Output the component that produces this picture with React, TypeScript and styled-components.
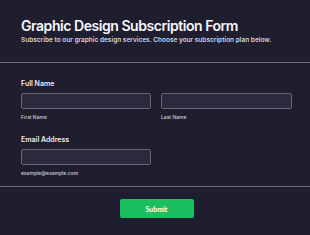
import React from "react";
import styled, { createGlobalStyle } from "styled-components";

const GlobalStyle = createGlobalStyle`
  html, body {
    margin: 0;
    padding: 0;
    background: #1f1e2e;
  }
  body {
    font-family: Inter, "Noto Sans", sans-serif;
    color: #f2f1f7;
  }
`;

const Page = styled.div`
  width: 310px;
  min-height: 235px;
  background: #1f1e2e;
`;

const Header = styled.header`
  padding: 17px 18px 17px 21px;
`;

const Title = styled.h1`
  margin: 0;
  font-size: 14px;
  line-height: 17px;
  font-weight: 600;
  letter-spacing: -0.45px;
  color: #f7f6fb;
`;

const Subtitle = styled.p`
  margin: 2px 0 0;
  font-size: 6.5px;
  line-height: 9px;
  font-weight: 600;
  color: #d4d2de;
`;

const Divider = styled.hr`
  margin: 0;
  border: 0;
  height: 1px;
  background: #6c6b7c;
`;

const Body = styled.section`
  padding: 16px 18px 10px 21px;
`;

const Field = styled.div<{ $gap?: number }>`
  margin-top: ${(p) => p.$gap ?? 0}px;
`;

const Label = styled.label`
  display: block;
  font-size: 7px;
  line-height: 9px;
  font-weight: 600;
  color: #ecebf2;
  margin-bottom: 5px;
`;

const Row = styled.div`
  display: grid;
  grid-template-columns: 130px 131px;
  column-gap: 10px;
`;

const Col = styled.div<{ $width?: number }>`
  display: flex;
  flex-direction: column;
  width: ${(p) => (p.$width ? `${p.$width}px` : "auto")};
`;

const Input = styled.input`
  box-sizing: border-box;
  width: 100%;
  height: 16px;
  margin: 0;
  padding: 0 4px;
  background: #2b2a3d;
  border: 1px solid #67667a;
  border-radius: 2px;
  color: #f2f1f7;
  font: inherit;
  font-size: 7px;
  outline: none;
`;

const Hint = styled.span`
  display: block;
  margin-top: 5px;
  font-size: 5px;
  line-height: 6px;
  font-weight: 500;
  color: #cfcdd8;
`;

const Footer = styled.div`
  display: flex;
  justify-content: center;
  padding: 12px 18px 0 21px;
`;

const SubmitButton = styled.button`
  width: 74px;
  height: 19px;
  border: 0;
  border-radius: 2px;
  background: #1cbf5f;
  color: #ffffff;
  font-family: Lato, Inter, sans-serif;
  font-size: 7px;
  font-weight: 700;
  cursor: pointer;
`;

export default function App() {
  return (
    <Page>
      <GlobalStyle />
      <Header>
        <Title>Graphic Design Subscription Form</Title>
        <Subtitle>
          Subscribe to our graphic design services. Choose your subscription plan below.
        </Subtitle>
      </Header>
      <Divider />
      <Body>
        <Field>
          <Label>Full Name</Label>
          <Row>
            <Col>
              <Input type="text" />
              <Hint>First Name</Hint>
            </Col>
            <Col>
              <Input type="text" />
              <Hint>Last Name</Hint>
            </Col>
          </Row>
        </Field>
        <Field $gap={15}>
          <Label>Email Address</Label>
          <Col $width={130}>
            <Input type="email" />
            <Hint>example@example.com</Hint>
          </Col>
        </Field>
      </Body>
      <Divider />
      <Footer>
        <SubmitButton type="submit">Submit</SubmitButton>
      </Footer>
    </Page>
  );
}
